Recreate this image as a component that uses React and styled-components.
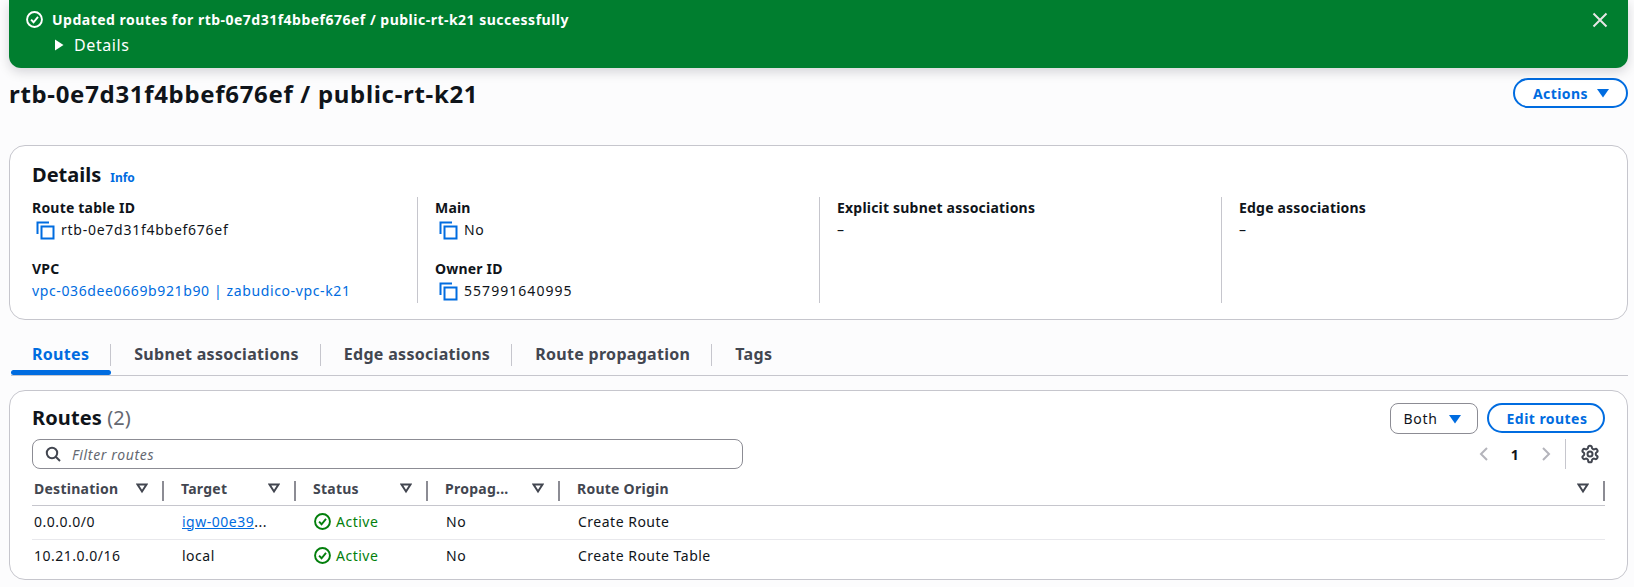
import React from "react";
import styled, { createGlobalStyle } from "styled-components";

const GlobalStyle = createGlobalStyle`
  html, body {
    margin: 0;
    background: #fcfcfd;
    color: #0f141a;
    font-family: "Noto Sans", "Open Sans", sans-serif;
    font-size: 14px;
    letter-spacing: 0.5px;
  }
  * { box-sizing: border-box; }
`;

const Page = styled.div`
  width: 1634px;
  height: 587px;
  padding: 0 6px 0 9px;
  overflow: hidden;
`;

const Flash = styled.div`
  height: 68px;
  background: #007e2f;
  border-radius: 0 0 12px 12px;
  box-shadow: 0 4px 12px rgba(0, 7, 22, 0.16);
  color: #fff;
  padding: 9px 17px;
  display: flex;
  justify-content: space-between;
  position: relative;
`;

const FlashBody = styled.div`
  display: flex;
  flex-direction: column;
`;

const FlashLine = styled.div`
  display: flex;
  align-items: center;
  gap: 9px;
  height: 20px;
  font-weight: 700;
  letter-spacing: 0.49px;
`;

const FlashDetails = styled.div`
  display: flex;
  align-items: center;
  gap: 10px;
  height: 24px;
  margin: 4px 0 0 28px;
  font-size: 16px;
  letter-spacing: 0.6px;
`;

const CloseBtn = styled.div`
  display: flex;
  color: #e6e6e6;
  height: 20px;
  align-items: center;
  margin: 1px 3px 0 0;
`;

const TitleRow = styled.div`
  height: 77px;
  display: flex;
  justify-content: space-between;
  padding-top: 10px;
`;

const Title = styled.h1`
  margin: -1px 0 0;
  font-size: 24px;
  line-height: 34px;
  font-weight: 700;
  letter-spacing: 0.68px;
`;

const OutlineBtn = styled.div`
  height: 30px;
  width: ${(p) => p.$w}px;
  border: 2px solid #006ce0;
  border-radius: 20px;
  background: #fff;
  color: #006ce0;
  font-weight: 700;
  letter-spacing: 0.45px;
  display: flex;
  align-items: center;
  justify-content: center;
  gap: 8px;
  padding-left: 2px;
`;

const Card = styled.section`
  background: #fff;
  border: 1px solid #c6c6cd;
  border-radius: 16px;
`;

const DetailsCard = styled(Card)`
  height: 175px;
  padding: 15px 22px;
`;

const CardHead = styled.div`
  display: flex;
  align-items: baseline;
  gap: 9px;
  height: 27px;
`;

const CardTitle = styled.h2`
  margin: 0;
  font-size: 20px;
  line-height: 27px;
  font-weight: 700;
  letter-spacing: 0;
  span {
    font-weight: 400;
    color: #656871;
  }
`;

const InfoLink = styled.a`
  font-size: 12px;
  font-weight: 700;
  letter-spacing: 0;
  color: #006ce0;
`;

const DetailGrid = styled.div`
  display: grid;
  grid-template-columns: 386px 402px 402px 403px;
  margin: 9px 0 0 0;
  height: 105px;
`;

const DetailCol = styled.div`
  border-right: ${(p) => (p.$last ? "none" : "1px solid #c6c6cd")};
  padding-left: ${(p) => (p.$first ? 0 : 17)}px;
  display: flex;
  flex-direction: column;
  gap: 17px;
  padding-top: 1px;
`;

const Field = styled.div`
  display: flex;
  flex-direction: column;
`;

const Label = styled.div`
  font-weight: 700;
  line-height: 20px;
  height: 20px;
  letter-spacing: 0.2px;
`;

const Value = styled.div`
  display: flex;
  align-items: center;
  gap: 6px;
  height: 24px;
  line-height: 24px;
  letter-spacing: ${(p) => p.$ls || 0.6}px;
  padding-left: ${(p) => (p.$icon ? 4 : 0)}px;
`;

const Link = styled.a`
  color: #006ce0;
  text-decoration: ${(p) => (p.$under ? "underline" : "none")};
`;

const TabBar = styled.div`
  height: 56px;
  border-bottom: 1px solid #c6c6cd;
  display: flex;
  margin: 0 0 14px 2px;
  padding-top: 23px;
`;

const Tab = styled.div`
  height: 32px;
  padding: 0 22px 10px ${(p) => (p.$active ? 21 : 23)}px;
  font-size: 16px;
  font-weight: 700;
  line-height: 22px;
  letter-spacing: 0.3px;
  color: ${(p) => (p.$active ? "#006ce0" : "#424650")};
  position: relative;

  &::before {
    content: "";
    display: ${(p) => (p.$last ? "none" : "block")};
    position: absolute;
    right: 0;
    top: 1px;
    height: 22px;
    width: 1px;
    background: #c6c6cd;
  }

  &::after {
    content: "";
    display: ${(p) => (p.$active ? "block" : "none")};
    position: absolute;
    left: 0;
    right: 0;
    bottom: 0;
    height: 5px;
    border-radius: 3px;
    background: #006ce0;
  }
`;

const RoutesCard = styled(Card)`
  height: 190px;
  padding: 12px 22px 0 22px;
`;

const RoutesTop = styled.div`
  display: flex;
  justify-content: space-between;
  height: 36px;
`;

const RoutesTitle = styled(CardTitle)`
  padding-top: 1px;
  letter-spacing: 0.1px;
`;

const TopActions = styled.div`
  display: flex;
  gap: 9px;
`;

const SelectBox = styled.div`
  width: 88px;
  height: 31px;
  border: 1px solid #8c8c94;
  border-radius: 8px;
  background: #fff;
  display: flex;
  align-items: center;
  justify-content: center;
  gap: 10px;
  padding-right: 3px;
  letter-spacing: 0.7px;
`;

const FilterRow = styled.div`
  display: flex;
  justify-content: space-between;
  height: 32px;
`;

const FilterBox = styled.div`
  width: 711px;
  height: 30px;
  border: 1px solid #8c8c94;
  border-radius: 8px;
  display: flex;
  align-items: center;
  gap: 11px;
  padding-left: 12px;
  color: #656871;
  font-style: italic;
  letter-spacing: 0.65px;
`;

const Pager = styled.div`
  display: flex;
  align-items: center;
  height: 30px;
`;

const PagerNum = styled.span`
  font-weight: 700;
  width: 50px;
  text-align: center;
`;

const PagerRule = styled.span`
  width: 1px;
  height: 30px;
  background: #c6c6cd;
  margin: 0 14px 0 13px;
`;

const PagerEnd = styled.span`
  width: 5px;
`;

const Grid = styled.div`
  display: grid;
  grid-template-columns: 132px 132px 132px 132px 1fr;
`;

const HeadCell = styled.div`
  height: 35px;
  border-bottom: 1px solid #c6c6cd;
  display: flex;
  align-items: center;
  justify-content: space-between;
  padding: 0 16px 0 ${(p) => (p.$first ? 2 : 17)}px;
  font-weight: 700;
  letter-spacing: 0.25px;
  color: #424650;
  position: relative;

  &::after {
    content: "";
    position: absolute;
    right: 0;
    top: 10px;
    height: 20px;
    width: 2px;
    background: #8c8c94;
  }
`;

const RowCell = styled.div`
  height: ${(p) => (p.$last ? 33 : 34)}px;
  border-bottom: ${(p) => (p.$last ? "none" : "1px solid #e8e8ec")};
  display: flex;
  align-items: center;
  gap: 5px;
  padding: 0 0 3px ${(p) => (p.$first ? 2 : 18)}px;
`;

const Green = styled.span`
  color: #037f0c;
`;

const CopyIcon = () => (
  <svg width="19" height="19" viewBox="0 0 19 19" fill="none" stroke="#006ce0" strokeWidth="2">
    <path d="M1.5 13V1.5H13" />
    <rect x="5.5" y="5.5" width="12" height="12" />
  </svg>
);

const CheckCircle = ({ color, size }) => (
  <svg width={size} height={size} viewBox="0 0 16 16" fill="none" stroke={color} strokeWidth="1.8">
    <circle cx="8" cy="8" r="7" />
    <path d="M4.8 8.2l2.3 2.4 4.2-5" />
  </svg>
);

const Caret = ({ size = 14 }) => (
  <svg width={size} height={size} viewBox="0 0 14 14">
    <path d="M1 3h12L7 11.5z" fill="#006ce0" />
  </svg>
);

const FilterCaret = () => (
  <svg width="12" height="12" viewBox="0 0 12 12" fill="none" stroke="#424650" strokeWidth="2">
    <path d="M1.5 2.5h9L6 9.5z" />
  </svg>
);

const Chevron = ({ flip }) => (
  <svg width="12" height="16" viewBox="0 0 12 16" fill="none" stroke="#b4b4bb" strokeWidth="2">
    <path d={flip ? "M3 2l6 6-6 6" : "M9 2L3 8l6 6"} />
  </svg>
);

const SearchIcon = () => (
  <svg width="16" height="16" viewBox="0 0 16 16" fill="none" stroke="#424650" strokeWidth="2">
    <circle cx="7" cy="7" r="5.2" />
    <path d="M11 11l4 4" />
  </svg>
);

const GearIcon = () => (
  <svg width="20" height="20" viewBox="0 0 24 24" fill="none" stroke="#424650" strokeWidth="2.4" strokeLinejoin="round">
    <path d="M12.22 2h-.44a2 2 0 0 0-2 2v.18a2 2 0 0 1-1 1.73l-.43.25a2 2 0 0 1-2 0l-.15-.08a2 2 0 0 0-2.73.73l-.22.38a2 2 0 0 0 .73 2.73l.15.1a2 2 0 0 1 1 1.72v.51a2 2 0 0 1-1 1.74l-.15.09a2 2 0 0 0-.73 2.73l.22.38a2 2 0 0 0 2.73.73l.15-.08a2 2 0 0 1 2 0l.43.25a2 2 0 0 1 1 1.73V20a2 2 0 0 0 2 2h.44a2 2 0 0 0 2-2v-.18a2 2 0 0 1 1-1.73l.43-.25a2 2 0 0 1 2 0l.15.08a2 2 0 0 0 2.73-.73l.22-.39a2 2 0 0 0-.73-2.73l-.15-.08a2 2 0 0 1-1-1.74v-.5a2 2 0 0 1 1-1.74l.15-.09a2 2 0 0 0 .73-2.73l-.22-.38a2 2 0 0 0-2.73-.73l-.15.08a2 2 0 0 1-2 0l-.43-.25a2 2 0 0 1-1-1.73V4a2 2 0 0 0-2-2z" />
    <circle cx="12" cy="12" r="3" />
  </svg>
);

const heads = ["Destination", "Target", "Status", "Propag...", "Route Origin"];
const rows = [
  { dest: "0.0.0.0/0", target: "igw-00e39", origin: "Create Route" },
  { dest: "10.21.0.0/16", target: "local", origin: "Create Route Table" },
];
const tabs = ["Routes", "Subnet associations", "Edge associations", "Route propagation", "Tags"];

export default function App() {
  return (
    <Page>
      <GlobalStyle />
      <Flash>
        <FlashBody>
          <FlashLine>
            <CheckCircle color="#fff" size={17} />
            Updated routes for rtb-0e7d31f4bbef676ef / public-rt-k21 successfully
          </FlashLine>
          <FlashDetails>
            <svg width="10" height="12" viewBox="0 0 10 12">
              <path d="M1 0.5l8.5 5.5L1 11.5z" fill="#fff" />
            </svg>
            Details
          </FlashDetails>
        </FlashBody>
        <CloseBtn>
          <svg width="16" height="16" viewBox="0 0 16 16" stroke="#e6e6e6" strokeWidth="2">
            <path d="M1.5 1.5l13 13M14.5 1.5l-13 13" />
          </svg>
        </CloseBtn>
      </Flash>
      <TitleRow>
        <Title>rtb-0e7d31f4bbef676ef / public-rt-k21</Title>
        <OutlineBtn $w={115}>
          Actions <Caret />
        </OutlineBtn>
      </TitleRow>
      <DetailsCard>
        <CardHead>
          <CardTitle>Details</CardTitle>
          <InfoLink>Info</InfoLink>
        </CardHead>
        <DetailGrid>
          <DetailCol $first>
            <Field>
              <Label>Route table ID</Label>
              <Value $icon $ls={0.74}>
                <CopyIcon />
                rtb-0e7d31f4bbef676ef
              </Value>
            </Field>
            <Field>
              <Label>VPC</Label>
              <Value $ls={0.62}>
                <Link>vpc-036dee0669b921b90 | zabudico-vpc-k21</Link>
              </Value>
            </Field>
          </DetailCol>
          <DetailCol>
            <Field>
              <Label>Main</Label>
              <Value $icon>
                <CopyIcon />
                No
              </Value>
            </Field>
            <Field>
              <Label>Owner ID</Label>
              <Value $icon $ls={1.04}>
                <CopyIcon />
                557991640995
              </Value>
            </Field>
          </DetailCol>
          <DetailCol>
            <Field>
              <Label>Explicit subnet associations</Label>
              <Value>–</Value>
            </Field>
          </DetailCol>
          <DetailCol $last>
            <Field>
              <Label>Edge associations</Label>
              <Value>–</Value>
            </Field>
          </DetailCol>
        </DetailGrid>
      </DetailsCard>
      <TabBar>
        {tabs.map((t, i) => (
          <Tab key={t} $active={i === 0} $last={i === tabs.length - 1}>
            {t}
          </Tab>
        ))}
      </TabBar>
      <RoutesCard>
        <RoutesTop>
          <RoutesTitle>
            Routes <span>(2)</span>
          </RoutesTitle>
          <TopActions>
            <SelectBox>
              Both <Caret />
            </SelectBox>
            <OutlineBtn $w={118}>Edit routes</OutlineBtn>
          </TopActions>
        </RoutesTop>
        <FilterRow>
          <FilterBox>
            <SearchIcon />
            Filter routes
          </FilterBox>
          <Pager>
            <Chevron />
            <PagerNum>1</PagerNum>
            <Chevron flip />
            <PagerRule />
            <GearIcon />
            <PagerEnd />
          </Pager>
        </FilterRow>
        <Grid>
          {heads.map((h, i) => (
            <HeadCell key={h} $first={i === 0}>
              {i === 4 ? <span>{h}</span> : h}
              <FilterCaret />
            </HeadCell>
          ))}
          {rows.map((r, i) => {
            const last = i === rows.length - 1;
            return (
              <React.Fragment key={r.dest}>
                <RowCell $first $last={last}>{r.dest}</RowCell>
                <RowCell $last={last}>
                  {i === 0 ? (
                    <span>
                      <Link $under>{r.target}</Link>...
                    </span>
                  ) : (
                    r.target
                  )}
                </RowCell>
                <RowCell $last={last}>
                  <CheckCircle color="#037f0c" size={17} />
                  <Green>Active</Green>
                </RowCell>
                <RowCell $last={last}>No</RowCell>
                <RowCell $last={last}>{r.origin}</RowCell>
              </React.Fragment>
            );
          })}
        </Grid>
      </RoutesCard>
    </Page>
  );
}
